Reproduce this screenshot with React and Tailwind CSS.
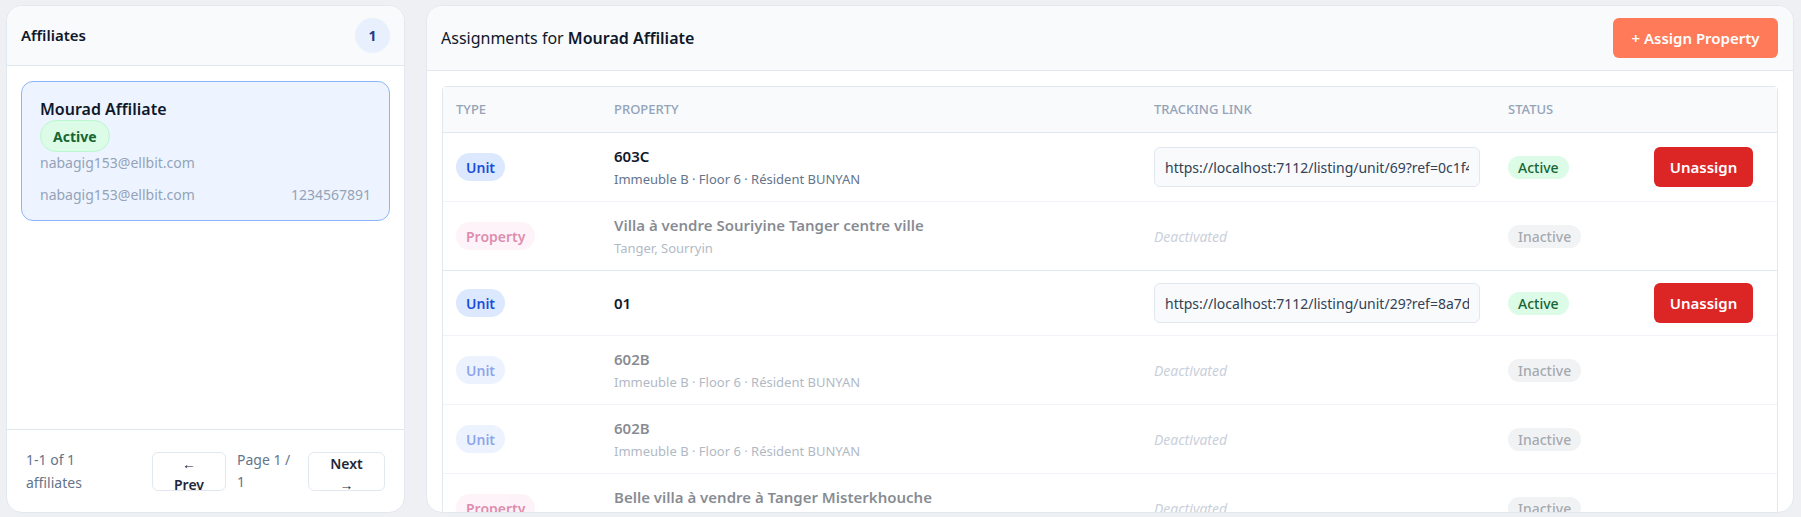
import React from "react";

const rows = [
  { type: "Unit", name: "603C", sub: "Immeuble B · Floor 6 · Résident BUNYAN", link: "https://localhost:7112/listing/unit/69?ref=0c1f4e2a9b", active: true },
  { type: "Property", name: "Villa à vendre Souriyine Tanger centre ville", sub: "Tanger, Sourryin", active: false },
  { type: "Unit", name: "01", link: "https://localhost:7112/listing/unit/29?ref=8a7d3c51e0", active: true },
  { type: "Unit", name: "602B", sub: "Immeuble B · Floor 6 · Résident BUNYAN", active: false },
  { type: "Unit", name: "602B", sub: "Immeuble B · Floor 6 · Résident BUNYAN", active: false },
  { type: "Property", name: "Belle villa à vendre à Tanger Misterkhouche", sub: "Tanger, Misterkhouche", active: false },
];

const TypeBadge = ({ type }) =>
  type === "Unit" ? (
    <span className="inline-flex h-[28px] items-center rounded-full bg-[#dbe8fe] px-[10px] text-[14px] font-semibold text-[#1d4ed8]">Unit</span>
  ) : (
    <span className="inline-flex h-[28px] items-center rounded-full bg-[#fce7f3] px-[10px] text-[14px] font-semibold text-[#be185d]">Property</span>
  );

const AssignmentRow = ({ row }) => (
  <div className={`grid grid-cols-[157px_540px_354px_146px_1fr] items-center border-t border-[#e2e8f0] py-[12px] ${row.active ? "" : "opacity-50"}`}>
    <div className="px-[13px]">
      <TypeBadge type={row.type} />
    </div>
    <div className="px-[14px]">
      <div className="text-[15px] font-semibold leading-[22px] text-[#0f172a]">{row.name}</div>
      {row.sub && <div className="mt-[2px] text-[13px] leading-[20px] text-[#64748b]">{row.sub}</div>}
    </div>
    <div className="px-[14px]">
      {row.active ? (
        <input
          readOnly
          value={row.link}
          className="h-[40px] w-full rounded-[6px] border border-[#e2e8f0] bg-[#f8fafc] px-[10px] text-[14px] text-[#334155] outline-none"
        />
      ) : (
        <span className="text-[14px] italic text-[#94a3b8]">Deactivated</span>
      )}
    </div>
    <div className="px-[14px]">
      {row.active ? (
        <span className="inline-flex h-[23px] items-center rounded-full bg-[#dcfce7] px-[10px] text-[14px] font-medium text-[#166534]">Active</span>
      ) : (
        <span className="inline-flex h-[23px] items-center rounded-full bg-[#e5e7eb] px-[10px] text-[14px] font-medium text-[#4b5563]">Inactive</span>
      )}
    </div>
    <div className="px-[14px]">
      {row.active && (
        <button className="h-[40px] w-[99px] rounded-[6px] bg-[#dc2626] text-[15px] font-semibold text-white">Unassign</button>
      )}
    </div>
  </div>
);

export default function App() {
  return (
    <div className="flex h-screen gap-[21px] bg-[#eef0f4] pb-[4px] pl-[6px] pr-[7px] pt-[5px] font-['Noto_Sans',sans-serif] text-[#0f172a]">
      {/* affiliates list */}
      <div className="flex w-[399px] flex-col overflow-hidden rounded-[16px] border border-[#e2e8f0] bg-white">
        <div className="flex h-[60px] items-center justify-between border-b border-[#e2e8f0] bg-[#f8fafc] px-[14px]">
          <h2 className="text-[15px] font-semibold">Affiliates</h2>
          <span className="flex h-[35px] w-[35px] items-center justify-center rounded-full bg-[#e8f0fe] text-[14px] font-bold text-[#1e3a8a]">1</span>
        </div>
        <div className="flex-1 px-[14px] pt-[15px]">
          <div className="rounded-[12px] border border-[#8db4fb] bg-[#edf4ff] px-[18px] pb-[14px] pt-[16px]">
            <div className="text-[16px] font-semibold leading-[22px]">Mourad Affiliate</div>
            <span className="inline-flex h-[32px] items-center rounded-full border border-[#bbf7d0] bg-[#dcfce7] px-[12px] text-[14px] font-bold text-[#166534]">Active</span>
            <div className="text-[14px] leading-[22px] text-[#94a3b8]">nabagig153@ellbit.com</div>
            <div className="mt-[10px] flex justify-between text-[14px] leading-[22px] text-[#94a3b8]">
              <span>nabagig153@ellbit.com</span>
              <span>1234567891</span>
            </div>
          </div>
        </div>
        <div className="flex h-[83px] items-center justify-between border-t border-[#e2e8f0] px-[19px]">
          <div className="w-[80px] text-[14px] leading-[23px] text-[#64748b]">1-1 of 1 affiliates</div>
          <div className="flex items-center gap-[11px]">
            <button className="flex h-[39px] w-[74px] flex-col items-center justify-start rounded-[6px] border border-[#e2e8f0] bg-white text-[14px] font-semibold leading-[21px] text-[#1e293b]">
              <span>←</span>
              <span>Prev</span>
            </button>
            <div className="w-[60px] text-[14px] leading-[22px] text-[#64748b]">Page 1 / 1</div>
            <button className="flex h-[39px] w-[77px] flex-col items-center justify-start rounded-[6px] border border-[#e2e8f0] bg-white text-[14px] font-semibold leading-[21px] text-[#1e293b]">
              <span>Next</span>
              <span>→</span>
            </button>
          </div>
        </div>
      </div>

      {/* assignments */}
      <div className="flex flex-1 flex-col overflow-hidden rounded-[16px] border border-[#e2e8f0] bg-white">
        <div className="flex h-[65px] shrink-0 items-center justify-between border-b border-[#e2e8f0] bg-[#f8fafc] pl-[14px] pr-[15px]">
          <h2 className="text-[16px]">
            Assignments for <span className="font-semibold">Mourad Affiliate</span>
          </h2>
          <button className="h-[40px] w-[165px] rounded-[6px] bg-[#ff7a59] text-[15px] font-semibold text-white">+ Assign Property</button>
        </div>
        <div className="flex-1 overflow-hidden px-[15px] pt-[15px]">
          <div className="rounded-t-[4px] border border-[#e2e8f0]">
            <div className="grid h-[45px] grid-cols-[157px_540px_354px_146px_1fr] items-center bg-[#f8fafc] text-[13px] font-medium uppercase text-[#94a3b8]">
              <div className="px-[13px]">Type</div>
              <div className="px-[14px]">Property</div>
              <div className="px-[14px]">Tracking Link</div>
              <div className="px-[14px]">Status</div>
              <div />
            </div>
            {rows.map((row, i) => (
              <AssignmentRow key={i} row={row} />
            ))}
          </div>
        </div>
      </div>
    </div>
  );
}
